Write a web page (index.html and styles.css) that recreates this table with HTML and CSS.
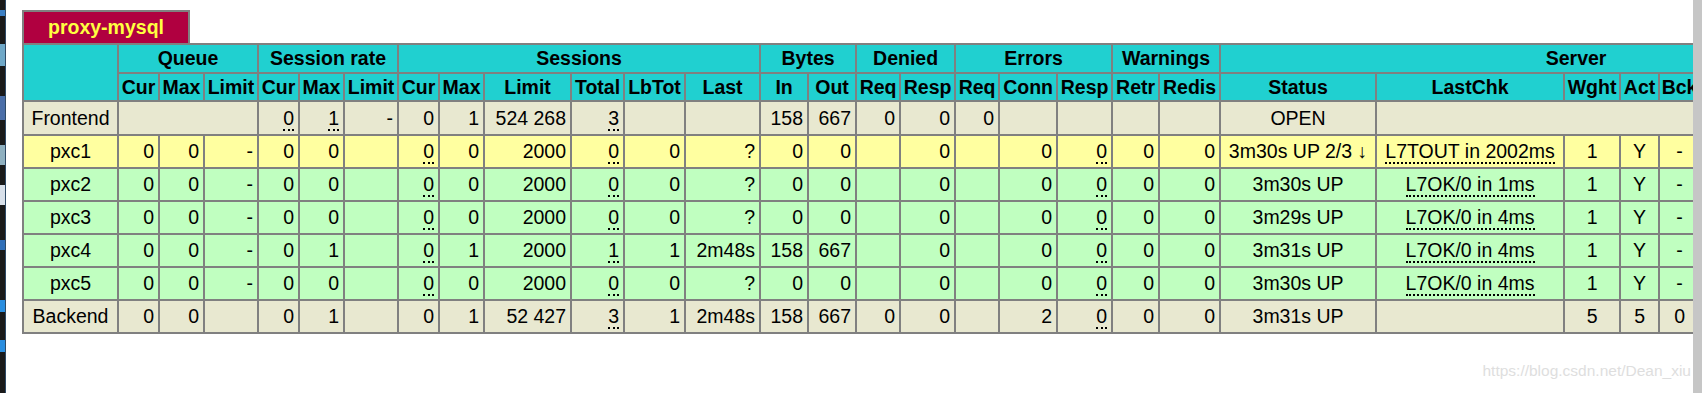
FILE: index.html
```html
<!DOCTYPE html>
<html lang="en">
<head>
<meta charset="utf-8">
<title>Statistics Report for HAProxy</title>
<link rel="stylesheet" href="styles.css">
</head>
<body>
<div class="taskbar"></div>
<div class="page">
  <div class="pxname">proxy-mysql</div>
  <table class="tbl">
    <colgroup>
      <col class="c95">
      <col class="c41"><col class="c45"><col class="c54">
      <col class="c41"><col class="c45"><col class="c54">
      <col class="c41"><col class="c45"><col class="c87"><col class="c53"><col class="c61"><col class="c75">
      <col class="c48"><col class="c48">
      <col class="c44"><col class="c55">
      <col class="c44"><col class="c58"><col class="c55">
      <col class="c47"><col class="c61">
      <col class="c156"><col class="c188"><col class="c56"><col class="c39"><col class="c41"><col class="c44"><col class="c48"><col class="c75"><col class="c65">
    </colgroup>
    <tr class="titre h1">
      <th rowspan="2"></th>
      <th colspan="3">Queue</th>
      <th colspan="3">Session rate</th>
      <th colspan="6">Sessions</th>
      <th colspan="2">Bytes</th>
      <th colspan="2">Denied</th>
      <th colspan="3">Errors</th>
      <th colspan="2">Warnings</th>
      <th colspan="9">Server</th>
    </tr>
    <tr class="titre h2">
      <th>Cur</th><th>Max</th><th>Limit</th>
      <th>Cur</th><th>Max</th><th>Limit</th>
      <th>Cur</th><th>Max</th><th>Limit</th><th>Total</th><th>LbTot</th><th>Last</th>
      <th>In</th><th>Out</th>
      <th>Req</th><th>Resp</th>
      <th>Req</th><th>Conn</th><th>Resp</th>
      <th>Retr</th><th>Redis</th>
      <th>Status</th><th>LastChk</th><th>Wght</th><th>Act</th><th>Bck</th><th>Chk</th><th>Dwn</th><th>Dwntme</th><th>Thrtle</th>
    </tr>
    <tr class="frontend">
      <td class="ac">Frontend</td>
      <td colspan="3"></td>
      <td><u>0</u></td><td><u>1</u></td><td>-</td>
      <td>0</td><td>1</td><td>524&nbsp;268</td><td><u>3</u></td><td></td><td></td>
      <td>158</td><td>667</td>
      <td>0</td><td>0</td>
      <td>0</td><td></td><td></td>
      <td></td><td></td>
      <td class="ac">OPEN</td>
      <td colspan="8"></td>
    </tr>
    <tr class="going_down">
      <td class="ac">pxc1</td>
      <td>0</td><td>0</td><td>-</td>
      <td>0</td><td>0</td><td></td>
      <td><u>0</u></td><td>0</td><td>2000</td><td><u>0</u></td><td>0</td><td>?</td>
      <td>0</td><td>0</td>
      <td></td><td>0</td>
      <td></td><td>0</td><td><u>0</u></td>
      <td>0</td><td>0</td>
      <td class="ac">3m30s UP 2/3 &darr;</td>
      <td class="ac"><u>L7TOUT in 2002ms</u></td>
      <td class="ac">1</td><td class="ac">Y</td><td class="ac">-</td>
      <td><u>0</u></td><td>0</td><td>0s</td><td class="ac">-</td>
    </tr>
    <tr class="up">
      <td class="ac">pxc2</td>
      <td>0</td><td>0</td><td>-</td>
      <td>0</td><td>0</td><td></td>
      <td><u>0</u></td><td>0</td><td>2000</td><td><u>0</u></td><td>0</td><td>?</td>
      <td>0</td><td>0</td>
      <td></td><td>0</td>
      <td></td><td>0</td><td><u>0</u></td>
      <td>0</td><td>0</td>
      <td class="ac">3m30s UP</td>
      <td class="ac"><u>L7OK/0 in 1ms</u></td>
      <td class="ac">1</td><td class="ac">Y</td><td class="ac">-</td>
      <td><u>0</u></td><td>0</td><td>0s</td><td class="ac">-</td>
    </tr>
    <tr class="up">
      <td class="ac">pxc3</td>
      <td>0</td><td>0</td><td>-</td>
      <td>0</td><td>0</td><td></td>
      <td><u>0</u></td><td>0</td><td>2000</td><td><u>0</u></td><td>0</td><td>?</td>
      <td>0</td><td>0</td>
      <td></td><td>0</td>
      <td></td><td>0</td><td><u>0</u></td>
      <td>0</td><td>0</td>
      <td class="ac">3m29s UP</td>
      <td class="ac"><u>L7OK/0 in 4ms</u></td>
      <td class="ac">1</td><td class="ac">Y</td><td class="ac">-</td>
      <td><u>0</u></td><td>0</td><td>0s</td><td class="ac">-</td>
    </tr>
    <tr class="up">
      <td class="ac">pxc4</td>
      <td>0</td><td>0</td><td>-</td>
      <td>0</td><td>1</td><td></td>
      <td><u>0</u></td><td>1</td><td>2000</td><td><u>1</u></td><td>1</td><td>2m48s</td>
      <td>158</td><td>667</td>
      <td></td><td>0</td>
      <td></td><td>0</td><td><u>0</u></td>
      <td>0</td><td>0</td>
      <td class="ac">3m31s UP</td>
      <td class="ac"><u>L7OK/0 in 4ms</u></td>
      <td class="ac">1</td><td class="ac">Y</td><td class="ac">-</td>
      <td><u>0</u></td><td>0</td><td>0s</td><td class="ac">-</td>
    </tr>
    <tr class="up">
      <td class="ac">pxc5</td>
      <td>0</td><td>0</td><td>-</td>
      <td>0</td><td>0</td><td></td>
      <td><u>0</u></td><td>0</td><td>2000</td><td><u>0</u></td><td>0</td><td>?</td>
      <td>0</td><td>0</td>
      <td></td><td>0</td>
      <td></td><td>0</td><td><u>0</u></td>
      <td>0</td><td>0</td>
      <td class="ac">3m30s UP</td>
      <td class="ac"><u>L7OK/0 in 4ms</u></td>
      <td class="ac">1</td><td class="ac">Y</td><td class="ac">-</td>
      <td><u>0</u></td><td>0</td><td>0s</td><td class="ac">-</td>
    </tr>
    <tr class="backend">
      <td class="ac">Backend</td>
      <td>0</td><td>0</td><td></td>
      <td>0</td><td>1</td><td></td>
      <td>0</td><td>1</td><td>52&nbsp;427</td><td><u>3</u></td><td>1</td><td>2m48s</td>
      <td>158</td><td>667</td>
      <td>0</td><td>0</td>
      <td></td><td>2</td><td><u>0</u></td>
      <td>0</td><td>0</td>
      <td class="ac">3m31s UP</td>
      <td></td>
      <td class="ac">5</td><td class="ac">5</td><td class="ac">0</td>
      <td></td><td>0</td><td>0s</td><td></td>
    </tr>
  </table>
  <div class="watermark">https://blog.csdn.net/Dean_xiu</div>
</div>
<div class="scrollbar"></div>
</body>
</html>
```
FILE: styles.css
```css
html, body {
  margin: 0;
  padding: 0;
  height: 393px;
  overflow: hidden;
  background: #ffffff;
}

body {
  display: flex;
  font-family: "Liberation Sans", Arial, sans-serif;
  font-size: 19.5px;
  color: #000;
}

.taskbar {
  flex: 0 0 6px;
  background:
    linear-gradient(180deg,
      #1a1a1a 0, #1a1a1a 10px,
      #3b7fc4 10px, #3b7fc4 16px,
      #1a1a1a 16px, #1a1a1a 44px,
      #6fa8c8 44px, #6fa8c8 66px,
      #1a1a1a 66px, #1a1a1a 96px,
      #4a6ea8 96px, #4a6ea8 120px,
      #1a1a1a 120px, #1a1a1a 145px,
      #8fb0c0 145px, #8fb0c0 165px,
      #1a1a1a 165px, #1a1a1a 185px,
      #d8e0ea 185px, #d8e0ea 205px,
      #1a1a1a 205px, #1a1a1a 240px,
      #2f6fb8 240px, #2f6fb8 250px,
      #1a1a1a 250px, #1a1a1a 300px,
      #2a8ee0 300px, #2a8ee0 312px,
      #1a1a1a 312px, #1a1a1a 340px,
      #2a8ee0 340px, #2a8ee0 352px,
      #1a1a1a 352px);
  border-right: 1px solid #2e4a66;
  box-sizing: border-box;
}

.page {
  flex: 0 0 1687px;
  position: relative;
  overflow: hidden;
  padding: 10px 0 0 16px;
  box-sizing: border-box;
}

.scrollbar {
  flex: 0 0 9px;
  background: #c6c6c6;
}

.pxname {
  width: 168px;
  height: 33px;
  box-sizing: border-box;
  border: 2px solid #808080;
  border-bottom: none;
  background: #b00040;
  color: #ffff40;
  font-weight: bold;
  text-align: center;
  line-height: 31px;
}

.tbl {
  border-collapse: collapse;
  table-layout: fixed;
  width: 1911px;
}

.tbl td,
.tbl th {
  border: 2px solid #808080;
  white-space: nowrap;
  overflow: hidden;
}

.tbl th {
  padding: 0 1px;
  font-weight: bold;
  text-align: center;
}

.tbl td {
  padding: 0 4px;
  text-align: right;
  line-height: 31px;
}

.tbl td.ac {
  text-align: center;
}

.titre {
  background: #20d0d0;
  color: #000;
}

.h1 th {
  line-height: 27px;
}

.h2 th {
  line-height: 26px;
}

.frontend,
.backend {
  background: #e8e8d0;
}

.frontend td {
  line-height: 32px;
}

.going_down {
  background: #ffffa0;
}

.up {
  background: #c0ffc0;
}

.tbl u {
  text-decoration: none;
  border-bottom: 2px dotted #000;
}

.c39 { width: 39px; }
.c41 { width: 41px; }
.c44 { width: 44px; }
.c45 { width: 45px; }
.c47 { width: 47px; }
.c48 { width: 48px; }
.c53 { width: 53px; }
.c54 { width: 54px; }
.c55 { width: 55px; }
.c56 { width: 56px; }
.c58 { width: 58px; }
.c61 { width: 61px; }
.c65 { width: 65px; }
.c75 { width: 75px; }
.c87 { width: 87px; }
.c95 { width: 95px; }
.c156 { width: 156px; }
.c188 { width: 188px; }

.watermark {
  position: absolute;
  right: 2px;
  top: 362px;
  font-size: 15.5px;
  line-height: 18px;
  color: #dedede;
  white-space: nowrap;
}
```
